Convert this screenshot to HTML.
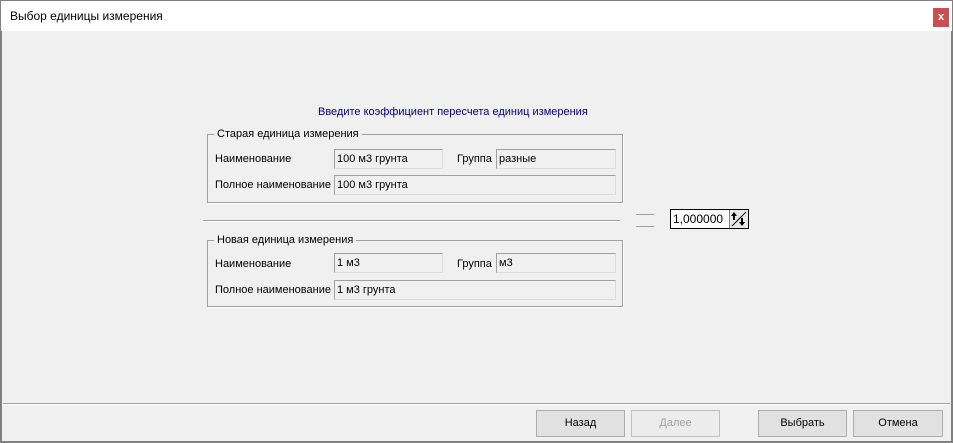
<!DOCTYPE html><html><head><style>
*{margin:0;padding:0;box-sizing:border-box}
body{width:953px;height:443px;background:#f0f0f0;font-family:"Liberation Sans",sans-serif;font-size:11px;color:#000;position:relative;overflow:hidden}
.a{position:absolute}
.f{position:absolute;border:1px solid #a0a0a0;border-right-color:#dcdcdc;border-bottom-color:#dcdcdc;padding:2px 2px;line-height:14px}
.g{position:absolute;border:1px solid #a0a0a0;box-shadow:1px 1px 0 #fff}
.lg{position:absolute;background:#f0f0f0;padding:0 3px;left:6px;top:-8px;line-height:14px}
.b{position:absolute;top:410px;width:89px;height:27px;border:1px solid #adadad;background:#e1e1e1;text-align:center;line-height:25px}
</style></head><body>
<div class="a" style="left:0;top:0;width:953px;height:31px;background:#fff;border:1px solid #808080;border-bottom:none"></div>
<div class="a" style="left:10px;top:9px;font-size:12px">Выбор единицы измерения</div>
<div class="a" style="left:933px;top:8px;width:16px;height:19px;background:#c75050;color:#fff;text-align:center;line-height:19px;font-size:11px;font-weight:bold">x</div>
<div class="a" style="left:0;top:31px;width:2px;height:412px;background:#808080"></div>
<div class="a" style="right:0;top:31px;width:2px;height:412px;background:#808080"></div>
<div class="a" style="left:0;bottom:0;width:953px;height:2px;background:#808080"></div>
<div class="a" style="left:318px;top:106px;color:#000080">Введите коэффициент пересчета единиц измерения</div>

<div class="g" style="left:207px;top:134px;width:416px;height:69px"><div class="lg">Старая единица измерения</div></div>
<div class="a" style="left:215px;top:153px">Наименование</div>
<div class="f" style="left:334px;top:149px;width:109px;height:20px">100 м3 грунта</div>
<div class="a" style="left:457px;top:153px">Группа</div>
<div class="f" style="left:496px;top:149px;width:120px;height:20px">разные</div>
<div class="a" style="left:215px;top:179px">Полное наименование</div>
<div class="f" style="left:334px;top:175px;width:282px;height:20px">100 м3 грунта</div>

<div class="a" style="left:203px;top:220px;width:417px;height:1px;background:#a0a0a0;box-shadow:0 1px 0 #fff"></div>
<div class="a" style="left:636px;top:214px;width:18px;height:1px;background:#a0a0a0"></div>
<div class="a" style="left:636px;top:226px;width:18px;height:1px;background:#a0a0a0"></div>
<div class="a" style="left:670px;top:209px;width:79px;height:20px;border:1px solid #000;background:#fff"></div>
<div class="a" style="left:673px;top:212px;font-size:12px">1,000000</div>
<div class="a" style="left:729px;top:210px;width:19px;height:18px;border-left:1px solid #808080;background:#e8e8e8">
<svg width="19" height="18"><line x1="2" y1="16" x2="16" y2="2" stroke="#000"/><path d="M4 2l-3 4h6z M12 16l-3-4h6z" fill="#000"/><rect x="3" y="5" width="2" height="5" fill="#000"/><rect x="11" y="8" width="2" height="5" fill="#000"/></svg></div>

<div class="g" style="left:207px;top:240px;width:416px;height:67px"><div class="lg">Новая единица измерения</div></div>
<div class="a" style="left:215px;top:258px">Наименование</div>
<div class="f" style="left:334px;top:253px;width:109px;height:20px">1 м3</div>
<div class="a" style="left:457px;top:258px">Группа</div>
<div class="f" style="left:496px;top:253px;width:120px;height:20px">м3</div>
<div class="a" style="left:215px;top:284px">Полное наименование</div>
<div class="f" style="left:334px;top:280px;width:282px;height:20px">1 м3 грунта</div>

<div class="a" style="left:3px;top:403px;width:947px;height:1px;background:#a0a0a0;box-shadow:0 1px 0 #fff"></div>
<div class="b" style="left:536px">Назад</div>
<div class="b" style="left:631px;color:#a0a0a0;background:#ececec;border-color:#bfbfbf">Далее</div>
<div class="b" style="left:758px">Выбрать</div>
<div class="b" style="left:853px;width:90px">Отмена</div>
</body></html>
